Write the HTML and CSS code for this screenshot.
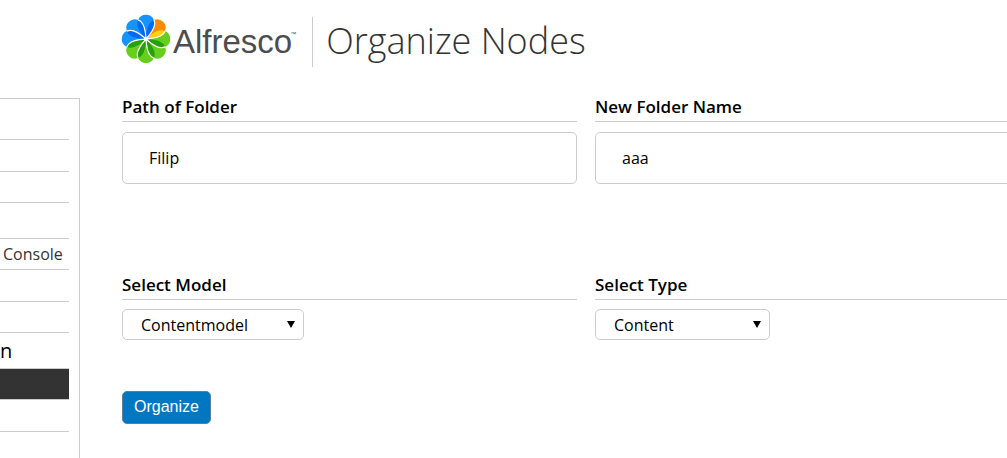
FILE: index.html
```html
<!DOCTYPE html>
<html lang="en">
<head>
<meta charset="utf-8">
<title>Organize Nodes</title>
<link rel="stylesheet" href="styles.css">
</head>
<body>
<header class="header">
  <div class="logo">
    <svg class="logo-mark" viewBox="-25 -25 50 50" aria-hidden="true">
      <defs>
        <path id="petal" d="M0 0C3.5 -4 8.7 -9.5 8.7 -15.5A8.7 8.7 0 0 0 7.92 -19.12A8.7 8.7 0 0 0 -7.92 -19.12A8.7 8.7 0 0 1 -4.81 -17.11C-.57 -12.87 -.35 -5.3 0 0Z"/>
        <path id="fold" d="M0 0C3.5 -4 8.7 -9.5 8.7 -15.5A8.7 8.7 0 0 0 7.92 -19.12A8.7 8.7 0 0 0 4.81 -17.11C.57 -12.87 .35 -5.3 0 0Z"/>
        <path id="edge" d="M0 0C3.5 -4 8.7 -9.5 8.7 -15.5A8.7 8.7 0 0 0 7.92 -19.12"/>
      </defs>
      <g><use href="#petal" fill="#1694fb"/><use href="#fold" fill="#0768f8"/></g>
      <g transform="rotate(45)"><use href="#petal" fill="#f98b0b"/><use href="#fold" fill="#ffd21a"/></g>
      <g transform="rotate(90)"><use href="#petal" fill="#66cf1c"/><use href="#fold" fill="#25a00c"/></g>
      <g transform="rotate(135)"><use href="#petal" fill="#66cf1c"/><use href="#fold" fill="#25a00c"/></g>
      <g transform="rotate(180)"><use href="#petal" fill="#66cf1c"/><use href="#fold" fill="#25a00c"/></g>
      <g transform="rotate(225)"><use href="#petal" fill="#66cf1c"/><use href="#fold" fill="#25a00c"/></g>
      <g transform="rotate(270)"><use href="#petal" fill="#1694fb"/><use href="#fold" fill="#0768f8"/></g>
      <g transform="rotate(315)"><use href="#petal" fill="#1694fb"/><use href="#fold" fill="#0768f8"/></g>
      <g fill="none" stroke="#fff" stroke-width="1.2">
        <use href="#edge"/>
        <use href="#edge" transform="rotate(45)"/>
        <use href="#edge" transform="rotate(90)"/>
        <use href="#edge" transform="rotate(135)"/>
        <use href="#edge" transform="rotate(180)"/>
        <use href="#edge" transform="rotate(225)"/>
        <use href="#edge" transform="rotate(270)"/>
        <use href="#edge" transform="rotate(315)"/>
      </g>
      <circle r="2" fill="#fff"/>
    </svg>
    <span class="logo-name">Alfresco</span><span class="logo-tm">™</span>
  </div>
  <h1 class="title">Organize Nodes</h1>
</header>
<div class="page">
  <nav class="sidebar">
    <ul class="menu">
      <li class="menu-item first"></li>
      <li class="menu-item tall"></li>
      <li class="menu-item"></li>
      <li class="menu-heading"></li>
      <li class="menu-item"><a href="#">Console</a></li>
      <li class="menu-item tall"></li>
      <li class="menu-item"></li>
      <li class="menu-heading">n</li>
      <li class="menu-item selected"></li>
      <li class="menu-item tall"></li>
    </ul>
  </nav>
  <main class="main">
    <form class="form">
      <div class="field">
        <label class="label" for="path">Path of Folder</label>
        <input class="input" id="path" type="text" value="Filip">
      </div>
      <div class="field">
        <label class="label" for="name">New Folder Name</label>
        <input class="input" id="name" type="text" value="aaa">
      </div>
      <div class="field">
        <label class="label for-select" for="model">Select Model</label>
        <div class="select-wrap">
          <select class="select model" id="model"><option>Contentmodel</option></select>
          <svg class="arrow" viewBox="0 0 8 7" aria-hidden="true"><path d="M0 0H8L4 7Z"/></svg>
        </div>
      </div>
      <div class="field">
        <label class="label for-select" for="type">Select Type</label>
        <div class="select-wrap">
          <select class="select type" id="type"><option>Content</option></select>
          <svg class="arrow" viewBox="0 0 8 7" aria-hidden="true"><path d="M0 0H8L4 7Z"/></svg>
        </div>
      </div>
      <button class="button" type="button">Organize</button>
    </form>
  </main>
</div>
</body>
</html>
```
FILE: styles.css
```css
* { box-sizing: border-box; }

body {
  margin: 0;
  overflow: hidden;
  background: #fff;
  color: #000;
  font: 16px/24px "Open Sans", sans-serif;
}

.header {
  display: flex;
  align-items: center;
  padding: 17px 0 0 121px;
}

.logo {
  display: flex;
  align-items: center;
  height: 50px;
  padding-right: 16px;
  border-right: 1px solid #ccc;
  color: #4b4d50;
}

.logo-mark { width: 50px; height: 50px; margin-bottom: 6px; }

.logo-name { font: 33px/44px "Liberation Sans", sans-serif; padding-left: 2px; }

.logo-tm {
  align-self: flex-start;
  margin: 12px 0 0 -2px;
  font: 6px/10px "Liberation Sans", sans-serif;
}

.title {
  margin: 0 0 2px 13px;
  color: #333;
  font-size: 36px;
  font-weight: 300;
  line-height: 46px;
}

.page { display: flex; padding-top: 31px; }

.sidebar {
  flex: 0 0 80px;
  min-height: 380px;
  padding-right: 10px;
  border: solid #ccc;
  border-width: 1px 1px 0 0;
}

.menu { margin: 0; padding: 0; list-style: none; }

.menu-item, .menu-heading {
  height: 31px;
  border-bottom: 1px solid #ccc;
  line-height: 30px;
}

.menu-item { padding-left: 3px; }
.menu-item.tall { height: 32px; }
.menu-item.first { height: 41px; }
.menu-item.selected { background: #333; }
.menu-item a { color: #333; text-decoration: none; }

.menu-heading { height: 36px; font-size: 20px; line-height: 35px; }

.main { flex: 1; min-width: 0; margin-right: -43px; padding-left: 42px; }

.form {
  display: grid;
  grid-template-columns: 1fr 1fr;
  grid-template-rows: 178px 115px auto;
  column-gap: 18px;
}

.label {
  display: block;
  margin-bottom: 10px;
  padding-bottom: 5px;
  border-bottom: 1px solid #ccc;
  font-size: 17px;
  font-weight: 600;
  line-height: 18px;
}

.label.for-select { margin-bottom: 9px; }

.input {
  display: block;
  width: 100%;
  height: 52px;
  padding: 0 26px;
  border: 1px solid #ccc;
  border-radius: 5px;
  background: #fff;
  color: #000;
  font: inherit;
}

.select-wrap { display: inline-block; position: relative; }

.select {
  display: block;
  appearance: none;
  height: 31px;
  padding: 0 18px;
  border: 1px solid #ccc;
  border-radius: 5px;
  background: #fff;
  color: #000;
  font: inherit;
}

.model { width: 182px; }
.type { width: 175px; }

.arrow { position: absolute; top: 12px; right: 9px; width: 8px; height: 7px; }

.button {
  justify-self: start;
  height: 33px;
  padding: 0 11px 2px;
  border: 1px solid #5d7f99;
  border-radius: 5px;
  background: #0078c1;
  color: #fff;
  font: 16px/20px "Liberation Sans", sans-serif;
}
```
